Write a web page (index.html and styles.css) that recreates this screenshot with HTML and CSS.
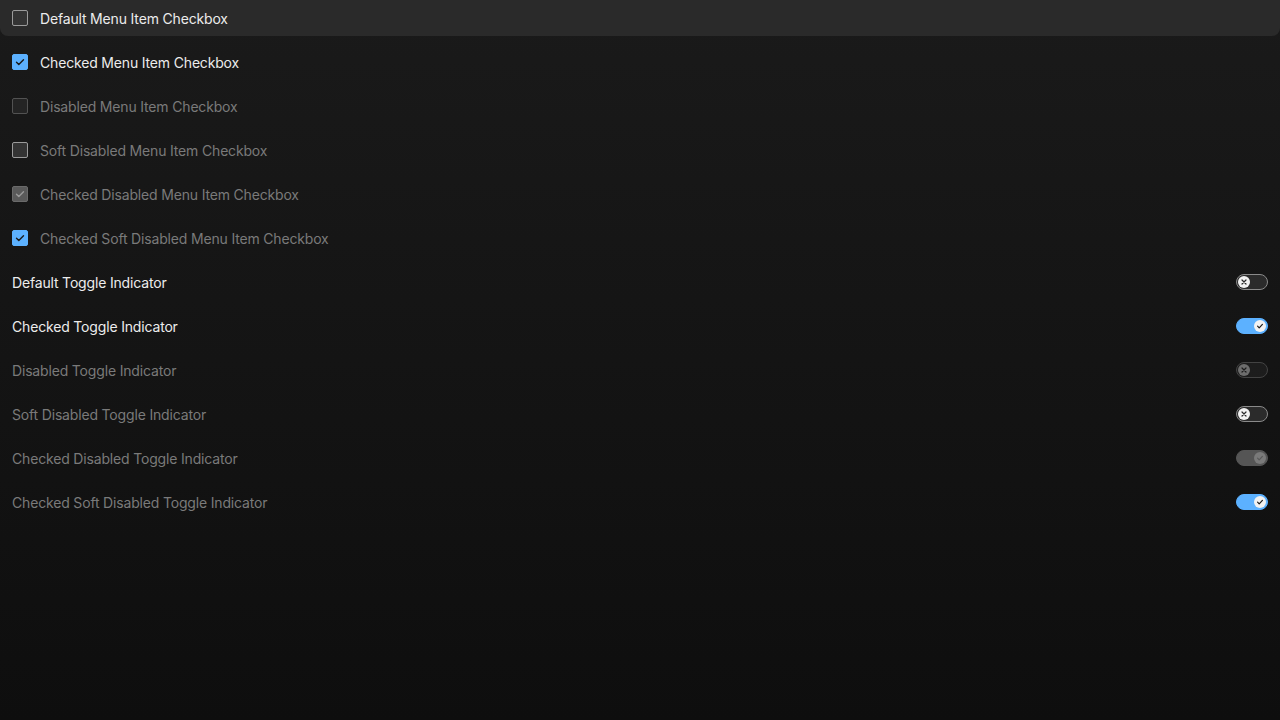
FILE: index.html
```html
<!DOCTYPE html>
<html>
<head>
<meta charset="utf-8">
<link rel="stylesheet" href="styles.css">
</head>
<body>
<div class="list">
  <div class="row hover">
    <span class="check"></span>
    <span class="label">Default Menu Item Checkbox</span>
  </div>
  <div class="row">
    <span class="check on"><svg viewBox="0 0 16 16"><path d="M4.5 8.2l2.3 2.3 4.7-4.7"/></svg></span>
    <span class="label">Checked Menu Item Checkbox</span>
  </div>
  <div class="row disabled">
    <span class="check"></span>
    <span class="label">Disabled Menu Item Checkbox</span>
  </div>
  <div class="row soft">
    <span class="check"></span>
    <span class="label">Soft Disabled Menu Item Checkbox</span>
  </div>
  <div class="row disabled">
    <span class="check gray"><svg viewBox="0 0 16 16"><path d="M4.5 8.2l2.3 2.3 4.7-4.7"/></svg></span>
    <span class="label">Checked Disabled Menu Item Checkbox</span>
  </div>
  <div class="row soft">
    <span class="check on"><svg viewBox="0 0 16 16"><path d="M4.5 8.2l2.3 2.3 4.7-4.7"/></svg></span>
    <span class="label">Checked Soft Disabled Menu Item Checkbox</span>
  </div>

  <div class="row toggle-row">
    <span class="label">Default Toggle Indicator</span>
    <span class="toggle"><span class="knob"><svg viewBox="0 0 12 12"><path d="M4 4l4 4M8 4l-4 4"/></svg></span></span>
  </div>
  <div class="row toggle-row">
    <span class="label">Checked Toggle Indicator</span>
    <span class="toggle on"><span class="knob"><svg viewBox="0 0 12 12"><path d="M3.6 6.2l1.6 1.6 3.2-3.4"/></svg></span></span>
  </div>
  <div class="row toggle-row disabled">
    <span class="label">Disabled Toggle Indicator</span>
    <span class="toggle"><span class="knob"><svg viewBox="0 0 12 12"><path d="M4 4l4 4M8 4l-4 4"/></svg></span></span>
  </div>
  <div class="row toggle-row soft">
    <span class="label">Soft Disabled Toggle Indicator</span>
    <span class="toggle"><span class="knob"><svg viewBox="0 0 12 12"><path d="M4 4l4 4M8 4l-4 4"/></svg></span></span>
  </div>
  <div class="row toggle-row disabled">
    <span class="label">Checked Disabled Toggle Indicator</span>
    <span class="toggle on gray"><span class="knob"><svg viewBox="0 0 12 12"><path d="M3.6 6.2l1.6 1.6 3.2-3.4"/></svg></span></span>
  </div>
  <div class="row toggle-row soft">
    <span class="label">Checked Soft Disabled Toggle Indicator</span>
    <span class="toggle on"><span class="knob"><svg viewBox="0 0 12 12"><path d="M3.6 6.2l1.6 1.6 3.2-3.4"/></svg></span></span>
  </div>
</div>
</body>
</html>
```

FILE: styles.css
```css
html, body {
  margin: 0;
  height: 100%;
}
body {
  background: linear-gradient(#1a1a1a, #0e0e0e);
  font-family: Inter, "Noto Sans", sans-serif;
  font-size: 14px;
  color: #ececec;
}
.list {
  display: flex;
  flex-direction: column;
  gap: 8px;
}
.row {
  height: 36px;
  display: flex;
  align-items: center;
  gap: 12px;
  padding: 0 12px;
  border-radius: 8px;
}
.row.hover {
  background: #2a2a2a;
  border-radius: 0 0 8px 8px;
}
.toggle-row {
  justify-content: space-between;
}
.label {
  line-height: 20px;
  padding-top: 2px;
  letter-spacing: -0.17px;
}
.disabled .label, .soft .label {
  color: #7a7a7a;
}
.check {
  width: 16px;
  height: 16px;
  box-sizing: border-box;
  border: 1px solid #9a9a9a;
  background: #333333;
  border-radius: 2px;
  display: flex;
}
.check svg {
  width: 16px;
  height: 16px;
  margin: -1px;
  fill: none;
  stroke: #1a1a1a;
  stroke-width: 1.4;
  stroke-linecap: round;
  stroke-linejoin: round;
}
.check.on {
  background: #5cb1ff;
  border-color: #5cb1ff;
}
.check.gray {
  background: #5a5a5a;
  border-color: #6a6a6a;
}
.check.gray svg {
  stroke: #9a9a9a;
}
.disabled .check {
  opacity: 0.45;
}
.disabled .check.gray {
  opacity: 1;
}
.toggle {
  width: 32px;
  height: 16px;
  box-sizing: border-box;
  border-radius: 8px;
  border: 1px solid #8a8a8a;
  background: #2b2b2b;
  display: flex;
  align-items: center;
  padding: 0 1px;
}
.knob {
  width: 12px;
  height: 12px;
  border-radius: 50%;
  background: #f2f2f2;
  display: flex;
}
.knob svg {
  width: 12px;
  height: 12px;
  fill: none;
  stroke: #2a2a2a;
  stroke-width: 1.2;
  stroke-linecap: round;
  stroke-linejoin: round;
}
.toggle.on {
  background: #5cb1ff;
  border-color: #5cb1ff;
  justify-content: flex-end;
}
.toggle.on .knob svg {
  stroke: #1a1a1a;
}
.disabled .toggle {
  opacity: 0.4;
}
.toggle.on.gray {
  background: #555555;
  border-color: #555555;
  opacity: 1;
}
.toggle.on.gray .knob {
  background: #7a7a7a;
}
.toggle.on.gray .knob svg {
  stroke: #5a5a5a;
}
```
